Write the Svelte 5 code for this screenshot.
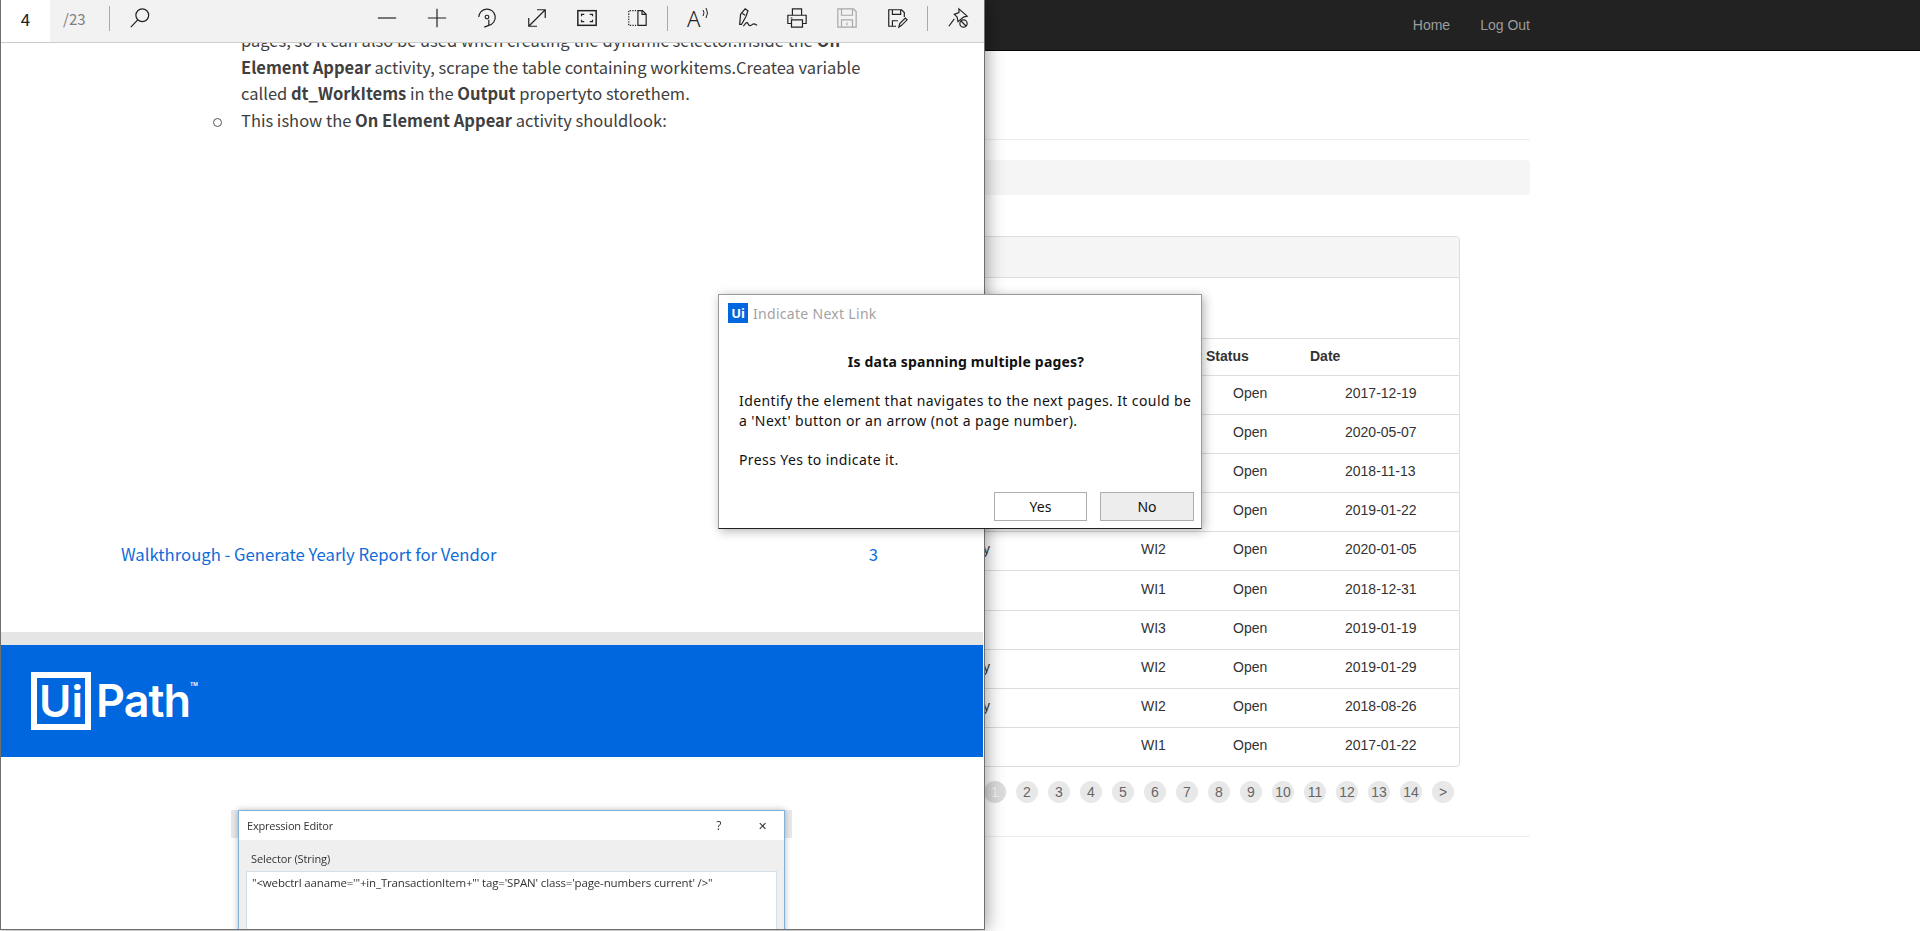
<script>
    const rows = [
        { desc: "", type: "", date: "2017-12-19" },
        { desc: "", type: "", date: "2020-05-07" },
        { desc: "", type: "", date: "2018-11-13" },
        { desc: "", type: "", date: "2019-01-22" },
        { desc: "y", type: "WI2", date: "2020-01-05" },
        { desc: "", type: "WI1", date: "2018-12-31" },
        { desc: "", type: "WI3", date: "2019-01-19" },
        { desc: "y", type: "WI2", date: "2019-01-29" },
        { desc: "y", type: "WI2", date: "2018-08-26" },
        { desc: "", type: "WI1", date: "2017-01-22" }
    ];
    const pages = ["1","2","3","4","5","6","7","8","9","10","11","12","13","14",">"];
</script>

<div class="desktop">
    <div class="browser">
        <nav class="navbar">
            <a href="#home">Home</a>
            <a href="#logout">Log Out</a>
        </nav>
        <main class="container">
            <hr class="rule first" />
            <div class="well"></div>
            <section class="panel">
                <div class="panel-head"></div>
                <div class="panel-intro"></div>
                <table>
                    <thead>
                        <tr>
                            <th class="c-desc"></th>
                            <th class="c-type"></th>
                            <th class="c-status">Status</th>
                            <th class="c-date">Date</th>
                        </tr>
                    </thead>
                    <tbody>
                        {#each rows as row}
                            <tr>
                                <td class="c-desc">{row.desc}</td>
                                <td class="c-type">{row.type}</td>
                                <td class="c-status">Open</td>
                                <td class="c-date">{row.date}</td>
                            </tr>
                        {/each}
                    </tbody>
                </table>
            </section>
            <div class="pager">
                {#each pages as p, i}
                    <span class="page {i === 0 ? 'current' : ''}">{p}</span>
                {/each}
            </div>
            <hr class="rule last" />
        </main>
    </div>

    <div class="pdf">
        <div class="toolbar">
            <span class="pagebox">4</span>
            <span class="total">/23</span>
            <span class="sep s1"></span>
            <svg class="ic search" viewBox="0 0 24 24"><circle cx="14.5" cy="9" r="7"/><path d="M9.5 14 2 22"/></svg>
            <svg class="ic minus" viewBox="0 0 24 24"><path d="M2 12h20"/></svg>
            <svg class="ic" viewBox="0 0 24 24"><path d="M2 12h20M12 2v20"/></svg>
            <svg class="ic" viewBox="0 0 24 24"><path d="M3 11a9 9 0 1 1 11 9M14 20v-6M14 20l-5 2"/><circle cx="12" cy="11" r="2"/></svg>
            <svg class="ic" viewBox="0 0 24 24"><path d="M3 21 21 3M12 3h9v9M3 12v9h9"/></svg>
            <svg class="ic" viewBox="0 0 24 24"><rect x="2" y="4" width="20" height="16" stroke-width="1.6"/><path d="M6 10V8h3M15 8h3v2M18 14v2h-3M9 16H6v-2"/></svg>
            <svg class="ic" viewBox="0 0 24 24"><path d="M11 4H3v16h8" stroke-dasharray="1.4 1.4"/><path d="M13 4h5l4 4v12h-9zM17.500 4v4h4.500"/></svg>
            <span class="sep s2"></span>
            <span class="read">A<svg viewBox="0 0 8 14"><path d="M1 3q2 2.500 0 6M4 1q3 5 0 10"/></svg></span>
            <svg class="ic" viewBox="0 0 24 24"><path d="M4 19 5 8l5-6 3 2-2 6-5 9zM7 7l3 2M8 21c3-4 4-5 5-3 1 3 3 3 5 1s3 0 5 1"/></svg>
            <svg class="ic" viewBox="0 0 24 24"><path d="M7 9V2h10v7M6 18H2V9h20v9h-4M6 14h12v8H6zM5 12h2"/></svg>
            <svg class="ic faded" viewBox="0 0 24 24"><path d="M3 2h16l3 3v17H2V2zM6 2v7h12V2M6 22v-8h12v8M12 17v3"/></svg>
            <svg class="ic" viewBox="0 0 24 24"><path d="M11 21H3V3h14l3 3v5M7 3v5h9V3M7 21v-6h6"/><path d="m14 22 1-4 6-6 2 2-6 6z"/></svg>
            <span class="sep s3"></span>
            <svg class="ic" viewBox="0 0 24 24"><path d="m13 2 9 8-4 1-6 5-1-5-3-3 5-2zM8 13l-6 8"/><circle cx="18" cy="18" r="4"/><path d="m15 15 6 6"/></svg>
        </div>

        <div class="doc">
            <div class="sheet">
                <p class="ln">pages, so it can also be used when creating the dynamic selector.Inside the <b>On</b></p>
                <p class="ln"><b>Element Appear</b> activity, scrape the table containing workitems.Createa variable</p>
                <p class="ln">called <b>dt_WorkItems</b> in the <b>Output</b> propertyto storethem.</p>
                <p class="ln bullet">This ishow the <b>On Element Appear</b> activity shouldlook:</p>
                <div class="doc-foot">
                    <span>Walkthrough - Generate Yearly Report for Vendor</span>
                    <span>3</span>
                </div>
            </div>
            <div class="band">
                <div class="logo">
                    <span class="logo-ui">Ui</span>
                    <span class="logo-path">Path</span>
                    <span class="tm">TM</span>
                </div>
            </div>
            <figure class="shot">
                <div class="shot-win">
                    <div class="shot-title">
                        <span>Expression Editor</span>
                        <span class="q">?</span>
                        <span class="x">✕</span>
                    </div>
                    <div class="shot-body">
                        <div class="shot-label">Selector (String)</div>
                        <div class="shot-box">"&lt;webctrl aaname='"+in_TransactionItem+"' tag='SPAN' class='page-numbers current' /&gt;"</div>
                    </div>
                </div>
            </figure>
        </div>
    </div>

    <div class="dialog">
        <div class="dlg-title">
            <span class="dlg-logo">Ui</span>
            <span>Indicate Next Link</span>
        </div>
        <h2>Is data spanning multiple pages?</h2>
        <p>Identify the element that navigates to the next pages. It could be<br />a 'Next' button or an arrow (not a page number).</p>
        <p class="press">Press Yes to indicate it.</p>
        <div class="dlg-buttons">
            <button>Yes</button>
            <button class="no">No</button>
        </div>
    </div>
</div>

<style>
    :global(body){
        margin:0;
        overflow:hidden;
        background:#fff;
    }
    .desktop{
        position:relative;
        width:1920px;
        height:931px;
        overflow:hidden;
        font-family:"Liberation Sans",Arial,sans-serif;
    }

    /* background browser */
    .navbar{
        height:50px;
        background:#222;
        border-bottom:1px solid #080808;
        display:flex;
        justify-content:flex-end;
        align-items:center;
        gap:30px;
        padding-right:390px;
        font-size:14px;
    }
    .navbar a{
        color:#9d9d9d;
        text-decoration:none;
    }
    .container{
        width:1140px;
        margin-left:390px;
    }
    .rule{
        border:0;
        border-top:1px solid #eee;
        margin:0;
    }
    .rule.first{
        margin-top:88px;
    }
    .rule.last{
        margin-top:33px;
    }
    .well{
        height:35px;
        margin-top:20px;
        background:#f5f5f5;
        border-radius:4px;
    }
    .panel{
        width:1068px;
        margin-top:41px;
        border:1px solid #ddd;
        border-radius:4px;
    }
    .panel-head{
        height:40px;
        background:#f5f5f5;
        border-bottom:1px solid #ddd;
        border-radius:3px 3px 0 0;
    }
    .panel-intro{
        height:60px;
    }
    table{
        width:100%;
        border-collapse:collapse;
        table-layout:fixed;
        font-size:14px;
        color:#333;
    }
    th,td{
        box-sizing:border-box;
        border-top:1px solid #ddd;
        padding:0;
        text-align:left;
    }
    th{
        height:37px;
        font-weight:bold;
        padding-bottom:3px;
    }
    td{
        height:39.1px;
        padding-bottom:4px;
    }
    .c-desc{
        width:727px;
        text-align:right;
        padding-right:128px;
    }
    .c-type{
        width:80px;
        padding-left:23px;
    }
    .c-status{
        width:104px;
    }
    th.c-status{
        padding-left:8px;
    }
    td.c-status{
        padding-left:35px;
    }
    th.c-date{
        padding-left:8px;
    }
    td.c-date{
        padding-left:43px;
    }
    .pager{
        display:flex;
        gap:10px;
        margin-top:14px;
        padding-left:594px;
    }
    .page{
        width:22px;
        height:22px;
        border-radius:50%;
        background:#e8e8e8;
        color:#666;
        font-size:14px;
        display:flex;
        align-items:center;
        justify-content:center;
    }
    .page.current{
        background:#ddd;
        color:#f5f5f5;
    }

    /* pdf viewer window */
    .pdf{
        position:absolute;
        left:0;
        top:0;
        width:983px;
        height:929px;
        background:#fff;
        border:1px solid #6f6f6f;
        border-top:0;
        box-shadow:0 0 18px rgba(0,0,0,.45);
        overflow:hidden;
        font-family:"Noto Sans CJK KR","Noto Sans",sans-serif;
    }
    .toolbar{
        position:absolute;
        left:0;
        right:0;
        top:0;
        height:42px;
        background:#f2f2f2;
        border-bottom:1px solid #ccc;
        display:flex;
        align-items:center;
        z-index:2;
    }
    .pagebox{
        width:49px;
        height:42px;
        background:#fff;
        text-align:center;
        font-size:17px;
        line-height:38px;
        color:#222;
    }
    .total{
        margin-left:13px;
        width:31px;
        font-size:15px;
        color:#808080;
        margin-top:-6px;
    }
    .sep{
        width:1px;
        height:25px;
        background:#aaa;
        margin-top:-6px;
    }
    .s1{
        margin-left:15px;
    }
    .ic{
        width:22px;
        height:22px;
        flex:none;
        fill:none;
        stroke:#222;
        stroke-width:1.3;
        margin-top:-6px;
    }
    .search{
        margin-left:19px;
        margin-right:225px;
    }
    .ic + .ic:not(.minus){
        margin-left:28px;
    }
    .ic.faded{
        stroke:#a8a8a8;
    }
    .s2{
        margin:-6px 19px 0 19px;
    }
    .s3{
        margin:-6px 19px 0 19px;
    }
    .read{
        width:22px;
        margin-right:27px;
        font-family:"Noto Sans",sans-serif;
        font-weight:300;
        font-size:22px;
        line-height:22px;
        color:#222;
        margin-top:-6px;
        position:relative;
    }
    .read svg{
        position:absolute;
        left:15px;
        top:0;
        width:8px;
        height:14px;
        fill:none;
        stroke:#222;
    }
    .doc{
        height:929px;
        overflow:hidden;
    }
    .sheet{
        height:632px;
        box-sizing:border-box;
        padding:27px 0 0 240px;
        font-size:16.500px;
        color:#404040;
    }
    .ln{
        margin:0;
        height:26.500px;
        line-height:26.500px;
        white-space:nowrap;
        width:640px;
    }
    .ln b{
        font-weight:700;
    }
    .bullet{
        position:relative;
    }
    .bullet::before{
        content:"";
        position:absolute;
        left:-28px;
        top:11px;
        width:7px;
        height:7px;
        border:1px solid #555;
        border-radius:50%;
    }
    .doc-foot{
        display:flex;
        justify-content:space-between;
        margin:408px 0 0 -120px;
        width:757px;
        font-size:16.700px;
        color:#0f6cd9;
        line-height:26px;
    }
    .band{
        border-top:13px solid #e5e5e5;
        height:112px;
        background:#0067df;
        box-sizing:content-box;
        display:flex;
        align-items:center;
        margin-right:1px;
    }
    .logo{
        margin-left:30px;
        display:flex;
        align-items:center;
        color:#fff;
        font-family:Inter,sans-serif;
        font-weight:600;
        position:relative;
    }
    .logo-ui{
        box-sizing:border-box;
        width:60px;
        height:58px;
        border:6px solid #fff;
        font-size:44px;
        line-height:46px;
        text-align:center;
    }
    .logo-path{
        margin-left:5px;
        font-size:45px;
        line-height:58px;
        letter-spacing:-1px;
    }
    .tm{
        font-size:5px;
        margin:-34px 0 0 0;
        width:6px;
    }
    .shot{
        margin:53px 0 0 230px;
        width:561px;
        filter:blur(.5px);
        background:linear-gradient(to bottom,#e8e8e8 0,#e8e8e8 28px,transparent 28px);
    }
    .shot-win{
        margin:0 auto;
        width:545px;
        height:131px;
        border:1px solid #7fb2de;
        border-bottom:0;
        background:#efefef;
        box-shadow:0 0 6px rgba(0,0,0,.3);
        font-family:"Open Sans",sans-serif;
        color:#333;
    }
    .shot-title{
        height:29px;
        background:#fff;
        display:flex;
        align-items:center;
        padding-left:8px;
        font-size:11px;
        letter-spacing:-.2px;
    }
    .shot-title .q{
        margin-left:auto;
        margin-right:37px;
        font-size:12px;
    }
    .shot-title .x{
        margin-right:17px;
        font-size:11px;
    }
    .shot-label{
        font-size:11px;
        padding:11px 0 5px 12px;
        letter-spacing:-.1px;
    }
    .shot-box{
        margin:0 7px;
        height:80px;
        background:#fff;
        border:1px solid #d5dfe8;
        border-bottom:0;
        padding:3px 5px;
        font-size:11.500px;
        letter-spacing:-.15px;
        white-space:nowrap;
    }

    /* uipath prompt */
    .dialog{
        position:absolute;
        left:718px;
        top:294px;
        width:484px;
        height:235px;
        box-sizing:border-box;
        background:#fff;
        border:1px solid #9a9a9a;
        border-bottom:1px solid #222;
        box-shadow:2px 2px 10px rgba(0,0,0,.3);
        font-family:"Noto Sans",sans-serif;
        font-size:14px;
        letter-spacing:.4px;
        color:#111;
        display:flex;
        flex-direction:column;
    }
    .dlg-title{
        display:flex;
        align-items:center;
        gap:5px;
        padding:8px 0 0 9px;
        font-size:14px;
        letter-spacing:.3px;
        color:#a3a3a3;
        height:20px;
    }
    .dlg-logo{
        width:20px;
        height:20px;
        background:#0067df;
        color:#fff;
        font-size:13px;
        font-weight:700;
        line-height:20px;
        text-align:center;
        letter-spacing:0;
    }
    h2{
        margin:29px 0 0;
        padding-left:12px;
        font-size:14px;
        font-weight:700;
        line-height:20px;
        text-align:center;
        letter-spacing:.2px;
    }
    .dialog p{
        margin:19px 0 0 20px;
        line-height:20px;
    }
    .dialog p.press{
        margin-top:19px;
    }
    .dlg-buttons{
        margin-top:auto;
        display:flex;
        justify-content:flex-end;
        gap:13px;
        padding:0 7px 7px 0;
    }
    button{
        width:93px;
        height:29px;
        box-sizing:border-box;
        background:#fff;
        border:1px solid #adadad;
        font-family:inherit;
        font-size:14px;
        color:#111;
        padding:0;
    }
    button.no{
        width:94px;
        background:#ededed;
    }
</style>
